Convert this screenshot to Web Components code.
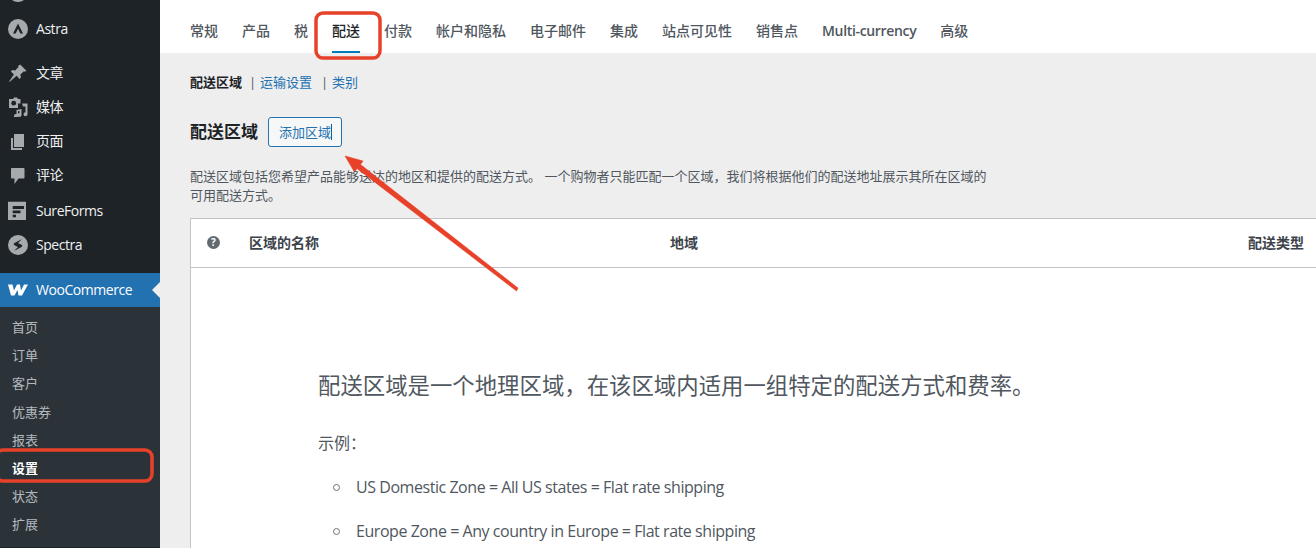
<!DOCTYPE html>
<html lang="zh-CN">
<head>
<meta charset="utf-8">
<title>配送区域</title>
<style>
  html, body { margin: 0; height: 548px; overflow: hidden; background: #eeeeee; }
  body { font-family: "Open Sans", "Noto Sans CJK SC", sans-serif; }
  wp-admin-page svg { display: block; }
</style>
</head>
<body>
<wp-admin-page>
  <wp-sidebar slot="side">
    <wp-menu-item style="margin-top:-25px">
      <svg slot="icon" width="20" height="20" viewBox="0 0 20 20"><circle cx="10" cy="10" r="10" fill="#a7aaad"/></svg>
    </wp-menu-item>
    <wp-menu-item label="Astra" style="margin-top:3px">
      <svg slot="icon" width="20" height="20" viewBox="0 0 20 20"><circle cx="10" cy="10" r="10" fill="#a7aaad"/><path d="M10 4.600 5 14.600h2.700l2.300-4.800 2.300 4.800H15z" fill="#1d2327"/></svg>
    </wp-menu-item>
    <wp-menu-item label="文章" style="margin-top:10px">
      <svg slot="icon" width="20" height="20" viewBox="0 0 20 20"><path d="M12.200 1.600 18.400 7.800l-1.500.9-1-.4-3.500 3.300.5 3-1.300 1.300-3-3.100L1.500 19l-.4-.4 4.800-7.200-3-3 1.300-1.300 3 .5 3.300-3.500-.4-1z" fill="#a7aaad"/></svg>
    </wp-menu-item>
    <wp-menu-item label="媒体">
      <svg slot="icon" width="20" height="20" viewBox="0 0 20 20"><path d="M1 2h4l1-1.500h3L10 2h2.500v4.500H10V11H1z" fill="#a7aaad"/><circle cx="5.700" cy="6.200" r="2.400" fill="#1d2327"/><path d="M14 6.500h5.500v10.800a2 2 0 1 1-2-2V9.500H15zM8.500 13l5-1v6a2 2 0 1 1-2-2v-2l-1.500.3V19a2 2 0 1 1-1.500-1.900z" fill="#a7aaad"/></svg>
    </wp-menu-item>
    <wp-menu-item label="页面">
      <svg slot="icon" width="20" height="20" viewBox="0 0 20 20"><path d="M6 3h10v13H6z" fill="#a7aaad"/><path d="M3 7h2v10h9v2H3z" fill="#a7aaad"/></svg>
    </wp-menu-item>
    <wp-menu-item label="评论">
      <svg slot="icon" width="20" height="20" viewBox="0 0 20 20"><path d="M4 3h11.500c.7 0 1 .4 1 1v8.500c0 .6-.4 1-1 1H10.500L6.500 19v-5.500H4c-.6 0-1-.4-1-1V4c0-.6.4-1 1-1z" fill="#a7aaad"/></svg>
    </wp-menu-item>
    <wp-menu-item label="SureForms" style="margin-top:2px">
      <svg slot="icon" width="20" height="20" viewBox="0 0 20 20"><path d="M0 .7h18v18.300H0zM4.700 5v3h11.300V5zm0 4.500v2.800H12.500V9.500zm0 4.300v2.500h3.300v-2.500z" fill="#a7aaad" fill-rule="evenodd"/></svg>
    </wp-menu-item>
    <wp-menu-item label="Spectra">
      <svg slot="icon" width="20" height="20" viewBox="0 0 20 20"><circle cx="10" cy="10" r="10" fill="#a7aaad"/><path d="M14 4 6.500 8c-1 .6-1 1.600 0 2.200l3.500 1.700L6 16l7.500-4c1-.6 1-1.600 0-2.200L10 8.100z" fill="#1d2327"/></svg>
    </wp-menu-item>
    <wp-menu-item label="WooCommerce" current style="margin-top:11px">
      <svg slot="icon" width="20" height="12" viewBox="0 0 20 12"><path d="M0 .5h4.500L6 6.500l3-6h3l1 6 3-6h4l-6 11h-3.500l-1-5.500-3 5.500H3z" fill="#fff"/></svg>
    </wp-menu-item>
    <wp-submenu>
      <wp-sub-item>首页</wp-sub-item>
      <wp-sub-item>订单</wp-sub-item>
      <wp-sub-item>客户</wp-sub-item>
      <wp-sub-item>优惠券</wp-sub-item>
      <wp-sub-item>报表</wp-sub-item>
      <wp-sub-item current>设置</wp-sub-item>
      <wp-sub-item>状态</wp-sub-item>
      <wp-sub-item>扩展</wp-sub-item>
    </wp-submenu>
  </wp-sidebar>

  <wc-tabs slot="top">
    <wc-tab>常规</wc-tab><wc-tab>产品</wc-tab><wc-tab>税</wc-tab>
    <wc-tab active>配送</wc-tab><wc-tab>付款</wc-tab><wc-tab>帐户和隐私</wc-tab>
    <wc-tab>电子邮件</wc-tab><wc-tab>集成</wc-tab><wc-tab>站点可见性</wc-tab>
    <wc-tab>销售点</wc-tab><wc-tab latin>Multi-currency</wc-tab><wc-tab>高级</wc-tab>
  </wc-tabs>

  <zone-settings>
    <zone-table></zone-table>
  </zone-settings>

  <red-marks></red-marks>
</wp-admin-page>

<script>
const CJK = '"Open Sans", "Noto Sans CJK SC", sans-serif';

class WpAdminPage extends HTMLElement {
  constructor() {
    super();
    this.attachShadow({ mode: "open" });
  }
  connectedCallback() {
    this.shadowRoot.innerHTML = `
      <style>
        :host { display: flex; width: 1316px; height: 548px; overflow: hidden; position: relative; font-family: ${CJK}; }
        .side { flex: 0 0 160px; }
        .main { flex: 1; min-width: 0; display: flex; flex-direction: column; }
      </style>
      <div class="side"><slot name="side"></slot></div>
      <div class="main"><slot name="top"></slot><slot></slot></div>
    `;
  }
}

class WpSidebar extends HTMLElement {
  constructor() {
    super();
    this.attachShadow({ mode: "open" });
  }
  connectedCallback() {
    this.shadowRoot.innerHTML = `
      <style>
        :host { display: flex; flex-direction: column; width: 160px; height: 548px; background: #1d2327; overflow: hidden; }
      </style>
      <slot></slot>
    `;
  }
}

class WpMenuItem extends HTMLElement {
  constructor() {
    super();
    this.attachShadow({ mode: "open" });
  }
  connectedCallback() {
    const label = this.getAttribute("label") || "";
    this.shadowRoot.innerHTML = `
      <style>
        :host { display: flex; flex: none; align-items: center; height: 34px; padding-left: 8px; color: #f0f0f1; font-size: 14px; letter-spacing: -.45px; position: relative; }
        :host([current]) { background: #2271b1; color: #fff; }
        .icon { width: 20px; height: 20px; margin-right: 8px; display: flex; align-items: center; justify-content: center; flex: none; }
        .label { padding-bottom: 2px; }
        :host([current]) .notch { position: absolute; right: 0; top: 9px; border: 8px solid transparent; border-right-color: #eeeeee; border-left: 0; }
      </style>
      <span class="icon"><slot name="icon"></slot></span>
      <span class="label">${label}</span>
      <span class="notch"></span>
    `;
  }
}

class WpSubmenu extends HTMLElement {
  constructor() {
    super();
    this.attachShadow({ mode: "open" });
  }
  connectedCallback() {
    this.shadowRoot.innerHTML = `
      <style>
        :host { display: flex; flex-direction: column; flex: none; background: #2c3338; padding: 6px 0 8px; }
      </style>
      <slot></slot>
    `;
  }
}

class WpSubItem extends HTMLElement {
  constructor() {
    super();
    this.attachShadow({ mode: "open" });
  }
  connectedCallback() {
    this.shadowRoot.innerHTML = `
      <style>
        :host { display: block; height: 28.2px; line-height: 28px; padding-left: 12px; font-size: 13px; color: rgba(240,246,252,.7); }
        :host([current]) { color: #fff; font-weight: 600; }
      </style>
      <slot></slot>
    `;
  }
}

class WcTabs extends HTMLElement {
  constructor() {
    super();
    this.attachShadow({ mode: "open" });
  }
  connectedCallback() {
    this.shadowRoot.innerHTML = `
      <style>
        :host { display: flex; flex: none; gap: 24px; height: 53px; padding-left: 30px; background: #fff; }
      </style>
      <slot></slot>
    `;
  }
}

class WcTab extends HTMLElement {
  constructor() {
    super();
    this.attachShadow({ mode: "open" });
  }
  connectedCallback() {
    this.shadowRoot.innerHTML = `
      <style>
        :host { display: block; height: 53px; box-sizing: border-box; padding-top: 21px; line-height: 19px; font-size: 14px; font-weight: 500; color: #50575e; border-bottom: 2px solid transparent; }
        :host([active]) { color: #1d2327; border-bottom-color: #007cba; }
        :host([latin]) { font-weight: 600; letter-spacing: -.33px; }
      </style>
      <slot></slot>
    `;
  }
}

class ZoneSettings extends HTMLElement {
  constructor() {
    super();
    this.attachShadow({ mode: "open" });
  }
  connectedCallback() {
    this.shadowRoot.innerHTML = `
      <style>
        :host { display: block; flex: 1; min-height: 0; padding: 20px 0 0 30px; color: #3c434a; font-size: 13px; }
        .links { display: flex; height: 18px; line-height: 18px; color: #50575e; }
        .links b { font-weight: 700; color: #1d2327; }
        .links a { color: #2271b1; text-decoration: none; }
        .links i { font-style: normal; }
        .head { display: flex; align-items: center; margin-top: 26px; height: 30px; gap: 10px; }
        h2 { margin: 0; font-size: 17px; line-height: 30px; font-weight: 600; color: #1d2327; }
        .add { display: flex; align-items: center; box-sizing: border-box; width: 74px; height: 30px; padding-left: 10px; border: 1px solid #2271b1; border-radius: 3px; background: #f6f7f7; color: #2271b1; font-size: 13px; }
        .add u { text-decoration: none; border-right: 1px solid #135e96; line-height: 16px; height: 16px; }
        p { margin: 20px 0 13px; width: 800px; line-height: 19px; font-size: 13px; color: #50575e; }
      </style>
      <div class="links"><b>配送区域</b><i style="margin:0 8px 0 7px;width:3px">|</i><a>运输设置</a><i style="margin:0 8px 0 9px;width:3px">|</i><a>类别</a></div>
      <div class="head"><h2>配送区域</h2><span class="add"><u>添加区域</u></span></div>
      <p>配送区域包括您希望产品能够送达的地区和提供的配送方式。 一个购物者只能匹配一个区域，我们将根据他们的配送地址展示其所在区域的可用配送方式。</p>
      <slot></slot>
    `;
  }
}

class ZoneTable extends HTMLElement {
  constructor() {
    super();
    this.attachShadow({ mode: "open" });
  }
  connectedCallback() {
    this.shadowRoot.innerHTML = `
      <style>
        :host { display: block; box-sizing: border-box; height: 340px; background: #fff; border: 1px solid #c3c4c7; border-right: 0; overflow: hidden; }
        .row { display: grid; grid-template-columns: 58px 421px 578px 1fr; align-items: center; box-sizing: border-box; height: 49px; padding-bottom: 2px; border-bottom: 1px solid #c3c4c7; font-size: 14px; font-weight: 600; color: #3c434a; }
        .q { padding-left: 16px; }
        .blank { padding: 105px 0 0 127px; color: #50575e; }
        h3 { margin: 0; font-size: 22.4px; line-height: 26px; font-weight: 400; color: #50575e; }
        .eg { margin: 33px 0 0; font-size: 16px; line-height: 22px; }
        ul { margin: 22px 0 0; padding: 0; list-style: none; font-size: 16px; line-height: 22px; letter-spacing: -.45px; }
        li { display: flex; align-items: center; margin-bottom: 22px; }
        li::before { content: ""; box-sizing: border-box; width: 7px; height: 7px; margin: 0 16px 0 15px; border: 1.5px solid #6c7278; border-radius: 50%; }
      </style>
      <div class="row">
        <span class="q"><svg style="display:block" width="13" height="13" viewBox="0 0 13 13"><circle cx="6.500" cy="6.500" r="6.500" fill="#646970"/><text x="6.500" y="10" text-anchor="middle" font-size="10" font-weight="700" fill="#fff" font-family="Open Sans">?</text></svg></span>
        <span>区域的名称</span><span>地域</span><span>配送类型</span>
      </div>
      <div class="blank">
        <h3>配送区域是一个地理区域，在该区域内适用一组特定的配送方式和费率。</h3>
        <div class="eg">示例：</div>
        <ul>
          <li>US Domestic Zone = All US states = Flat rate shipping</li>
          <li>Europe Zone = Any country in Europe = Flat rate shipping</li>
        </ul>
      </div>
    `;
  }
}

// screenshot annotations drawn on top of the page
class RedMarks extends HTMLElement {
  constructor() {
    super();
    this.attachShadow({ mode: "open" });
  }
  connectedCallback() {
    this.shadowRoot.innerHTML = `
      <style>
        :host { display: block; position: absolute; inset: 0; pointer-events: none; }
        svg { display: block; }
      </style>
      <svg width="1316" height="548" viewBox="0 0 1316 548" fill="none">
        <rect x="316" y="13" width="64" height="45" rx="7" stroke="#e8412a" stroke-width="3.500"/>
        <rect x="-4" y="450" width="156" height="31" rx="7" stroke="#e8412a" stroke-width="3.500"/>
        <path d="M345 156 363 161 360.500 164.500 518 288 516.500 291 357 168.500 354.500 172z" fill="#e8412a" stroke="#e8412a" stroke-width=".6" stroke-linejoin="round"/>
      </svg>
    `;
  }
}

customElements.define("wp-admin-page", WpAdminPage);
customElements.define("wp-sidebar", WpSidebar);
customElements.define("wp-menu-item", WpMenuItem);
customElements.define("wp-submenu", WpSubmenu);
customElements.define("wc-tabs", WcTabs);
customElements.define("wc-tab", WcTab);
customElements.define("wp-sub-item", WpSubItem);
customElements.define("zone-settings", ZoneSettings);
customElements.define("zone-table", ZoneTable);
customElements.define("red-marks", RedMarks);
</script>
</body>
</html>
